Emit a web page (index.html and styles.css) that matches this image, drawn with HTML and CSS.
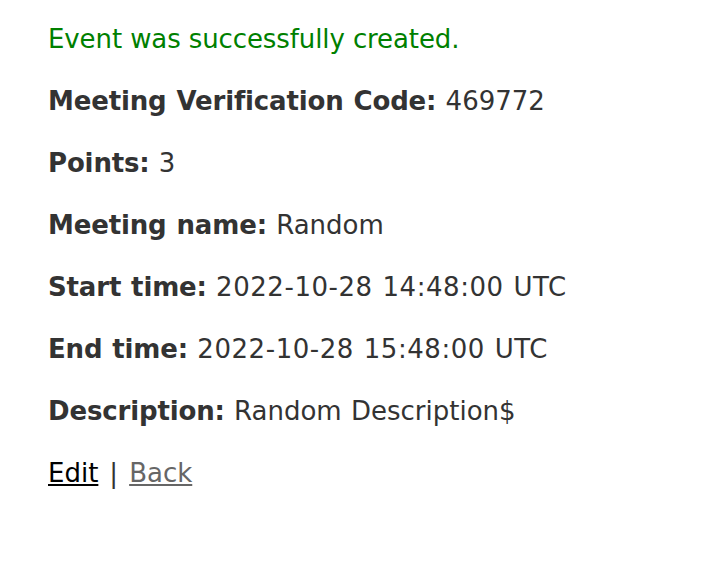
FILE: index.html
```html
<!DOCTYPE html>
<html>
<head>
<meta charset="utf-8">
<title>Event</title>
<link rel="stylesheet" href="styles.css">
</head>
<body>
<main class="page">
  <p class="notice">Event was successfully created.</p>
  <p><strong class="label">Meeting Verification Code:</strong> 469772</p>
  <p><strong class="label">Points:</strong> 3</p>
  <p><strong class="label">Meeting name:</strong> Random</p>
  <p><strong class="label">Start time:</strong> <span class="time">2022-10-28 14:48:00 UTC</span></p>
  <p><strong class="label">End time:</strong> <span class="time">2022-10-28 15:48:00 UTC</span></p>
  <p><strong class="label">Description:</strong> Random Description$</p>
  <p><a class="link" href="#edit">Edit</a><span class="sep">|</span><a class="link visited" href="#back">Back</a></p>
</main>
</body>
</html>
```

FILE: styles.css
```css
html, body {
  margin: 0;
  padding: 0;
  background: #fff;
}
body {
  color: #333;
  font-family: Verdana, "DejaVu Sans", sans-serif;
  font-size: 26px;
  line-height: 36px;
  word-spacing: 1px;
}
.page {
  padding: 21px 48px 0 48px;
}
.page p {
  margin: 0 0 26px 0;
}
.notice {
  color: #008000;
  letter-spacing: -0.1px;
  word-spacing: 0;
}
.label {
  letter-spacing: -0.15px;
}
.time {
  letter-spacing: 0.55px;
}
.sep {
  display: inline-block;
  padding: 0 11px;
}
.link {
  color: #000;
  text-decoration: underline;
}
.link.visited {
  color: #666;
}
```
